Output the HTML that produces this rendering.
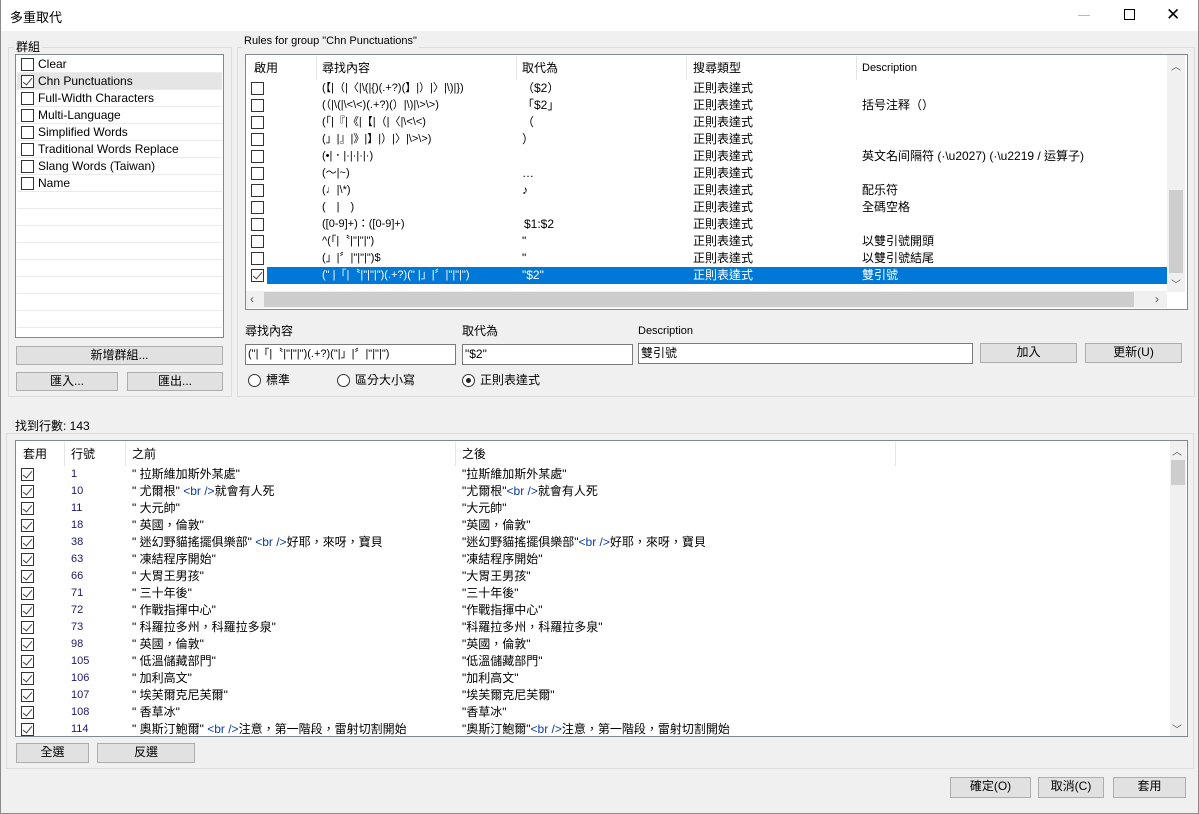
<!DOCTYPE html>
<html><head><meta charset="utf-8"><style>
*{box-sizing:border-box;margin:0;padding:0}
body{width:1199px;height:814px;overflow:hidden;background:#f0f0f0;font-family:"Liberation Sans","Noto Sans CJK TC",sans-serif;font-size:12px;color:#000;position:relative}
.a{position:absolute}
.win{left:0;top:0;width:1199px;height:814px;border:1px solid #8a8a8a;border-top:none}
.title{left:0;top:0;width:1199px;height:31px;background:#fff}
.gb{border:1px solid #dcdcdc}
.gl{background:#f0f0f0;padding:0 2px;line-height:14px}
.box{background:#fff;border:1px solid #828790}
.btn{background:#e1e1e1;border:1px solid #adadad;text-align:center;line-height:17px}
.cb{width:13px;height:13px;border:1px solid #333;background:#fff}
.cb.k::after{content:"";position:absolute;left:3px;top:0px;width:4px;height:8px;border:solid #444;border-width:0 1.3px 1.3px 0;transform:rotate(40deg)}
.row{position:absolute;height:17px;line-height:17px;white-space:nowrap}
.inp{background:#fff;border:1px solid #7a7a7a;line-height:18px;padding-left:2px;white-space:nowrap;overflow:hidden}
.rad{width:13px;height:13px;border:1px solid #333;border-radius:50%;background:#fff}
.sep{width:1px;background:#e5e5e5}
.n{color:#1a1a6e}
.t{color:#0b3c9c}
</style></head><body>
<div class="a title"></div>
<div class="a" style="left:10px;top:7px;font-size:13px">多重取代</div>
<div class="a" style="left:1078px;top:15px;width:12px;height:1px;background:#bbb"></div>
<div class="a" style="left:1124px;top:9px;width:11px;height:11px;border:1px solid #000"></div>
<div class="a" style="left:1166px;top:7px;font-size:17px;line-height:16px">✕</div>
<div class="a win"></div>

<!-- group box left -->
<div class="a gb" style="left:8px;top:47px;width:224px;height:350px"></div>
<div class="a gl" style="left:14px;top:40px;font-size:12px">群組</div>
<div class="a box" style="left:15px;top:54px;width:209px;height:284px"></div>
<div class="a" style="left:17px;top:73px;width:205px;height:17px;background:#e5e5e5"></div>
<div class="a" style="left:17px;top:56px;width:205px;height:280px;background:repeating-linear-gradient(to bottom,transparent 0,transparent 16px,#ebebeb 16px,#ebebeb 17px)"></div>
<div class="a" style="left:17px;top:73px;width:205px;height:16px;background:#e5e5e5"></div>
<div class="a cb" style="left:21px;top:58px"></div><div class="row" style="left:38px;top:56px">Clear</div>
<div class="a cb k" style="left:21px;top:75px"></div><div class="row" style="left:38px;top:73px">Chn Punctuations</div>
<div class="a cb" style="left:21px;top:92px"></div><div class="row" style="left:38px;top:90px">Full-Width Characters</div>
<div class="a cb" style="left:21px;top:109px"></div><div class="row" style="left:38px;top:107px">Multi-Language</div>
<div class="a cb" style="left:21px;top:126px"></div><div class="row" style="left:38px;top:124px">Simplified Words</div>
<div class="a cb" style="left:21px;top:143px"></div><div class="row" style="left:38px;top:141px">Traditional Words Replace</div>
<div class="a cb" style="left:21px;top:160px"></div><div class="row" style="left:38px;top:158px">Slang Words (Taiwan)</div>
<div class="a cb" style="left:21px;top:177px"></div><div class="row" style="left:38px;top:175px">Name</div>
<div class="a btn" style="left:16px;top:346px;width:207px;height:19px">新增群組...</div>
<div class="a btn" style="left:16px;top:372px;width:102px;height:19px">匯入...</div>
<div class="a btn" style="left:127px;top:372px;width:96px;height:19px">匯出...</div>

<!-- rules group -->
<div class="a gb" style="left:237px;top:47px;width:958px;height:350px"></div>
<div class="a gl" style="left:242px;top:34px;font-size:11px">Rules for group "Chn Punctuations"</div>
<div class="a box" style="left:245px;top:54px;width:943px;height:256px"></div>
<div class="a sep" style="left:316px;top:56px;height:24px"></div>
<div class="a sep" style="left:516px;top:56px;height:24px"></div>
<div class="a sep" style="left:686px;top:56px;height:24px"></div>
<div class="a sep" style="left:856px;top:56px;height:24px"></div>
<div class="row" style="left:254px;top:60px">啟用</div>
<div class="row" style="left:322px;top:60px">尋找內容</div>
<div class="row" style="left:522px;top:60px">取代為</div>
<div class="row" style="left:693px;top:60px">搜尋類型</div>
<div class="row" style="left:862px;top:60px;font-size:11px">Description</div>
<div class="a" style="left:267px;top:267px;width:900px;height:17px;background:#0078d7"></div>
<div class="a cb" style="left:251px;top:82px"></div><div class="a cb" style="left:251px;top:99px"></div><div class="a cb" style="left:251px;top:116px"></div><div class="a cb" style="left:251px;top:133px"></div><div class="a cb" style="left:251px;top:150px"></div><div class="a cb" style="left:251px;top:167px"></div><div class="a cb" style="left:251px;top:184px"></div><div class="a cb" style="left:251px;top:201px"></div><div class="a cb" style="left:251px;top:218px"></div><div class="a cb" style="left:251px;top:235px"></div><div class="a cb" style="left:251px;top:252px"></div><div class="a cb k" style="left:251px;top:269px"></div>
<div class="row" style="left:322px;top:80px;font-size:11px">(【|（|〈|\(|{)(.+?)(】|）|〉|\)|})</div>
<div class="row" style="left:322px;top:97px;font-size:11px">(（|\(|\&lt;\&lt;)(.+?)(）|\)|\&gt;\&gt;)</div>
<div class="row" style="left:322px;top:114px;font-size:11px">(「|『|《|【|（|〈|\&lt;\&lt;)</div>
<div class="row" style="left:322px;top:131px;font-size:11px">(」|』|》|】|）|〉|\&gt;\&gt;)</div>
<div class="row" style="left:322px;top:148px;font-size:11px">(•|．|·|·|·|·)</div>
<div class="row" style="left:322px;top:165px;font-size:11px">(～|~)</div>
<div class="row" style="left:322px;top:182px;font-size:11px">(♩|\*)</div>
<div class="row" style="left:322px;top:199px;font-size:11px">(　|　)</div>
<div class="row" style="left:322px;top:216px;font-size:11px">([0-9]+)：([0-9]+)</div>
<div class="row" style="left:322px;top:233px;font-size:11px">^(「|〝|"|"|")</div>
<div class="row" style="left:322px;top:250px;font-size:11px">(」|〞|"|"|")$</div>
<div class="row" style="left:322px;top:267px;font-size:11px;color:#fff">(" |「|〝|"|"|")(.+?)(" |」|〞|"|"|")</div>
<div class="row" style="left:522px;top:80px">（$2）</div>
<div class="row" style="left:522px;top:97px">「$2」</div>
<div class="row" style="left:522px;top:114px">（</div>
<div class="row" style="left:522px;top:131px">）</div>
<div class="row" style="left:522px;top:165px">…</div>
<div class="row" style="left:522px;top:182px">♪</div>
<div class="row" style="left:524px;top:216px">$1:$2</div>
<div class="row" style="left:522px;top:233px">"</div>
<div class="row" style="left:522px;top:250px">"</div>
<div class="row" style="left:522px;top:267px;color:#fff">"$2"</div>
<div class="row" style="left:693px;top:80px;line-height:17px">正則表達式<br>正則表達式<br>正則表達式<br>正則表達式<br>正則表達式<br>正則表達式<br>正則表達式<br>正則表達式<br>正則表達式<br>正則表達式<br>正則表達式<br><span style="color:#fff">正則表達式</span></div>
<div class="row" style="left:862px;top:97px">括号注释（）</div>
<div class="row" style="left:862px;top:148px">英文名间隔符 (·\u2027) (·\u2219 / 运算子)</div>
<div class="row" style="left:862px;top:182px">配乐符</div>
<div class="row" style="left:862px;top:199px">全碼空格</div>
<div class="row" style="left:862px;top:233px">以雙引號開頭</div>
<div class="row" style="left:862px;top:250px">以雙引號結尾</div>
<div class="row" style="left:862px;top:267px;color:#fff">雙引號</div>
<!-- scrollbars -->
<div class="a" style="left:1167px;top:55px;width:18px;height:237px;background:#f0f0f0"></div>
<div class="a" style="left:1169px;top:190px;width:14px;height:83px;background:#cdcdcd"></div>
<div class="a" style="left:1171px;top:58px;font-size:10px;color:#555">︿</div>
<div class="a" style="left:1171px;top:276px;font-size:10px;color:#555">﹀</div>
<div class="a" style="left:246px;top:291px;width:921px;height:17px;background:#f0f0f0"></div>
<div class="a" style="left:264px;top:292px;width:870px;height:15px;background:#cdcdcd"></div>
<div class="a" style="left:250px;top:292px;color:#555">‹</div>
<div class="a" style="left:1155px;top:292px;color:#555">›</div>

<div class="row" style="left:245px;top:323px">尋找內容</div>
<div class="a inp" style="left:245px;top:344px;width:211px;height:21px;font-size:11px">("|「|〝|"|"|")(.+?)("|」|〞|"|"|")</div>
<div class="row" style="left:462px;top:323px">取代為</div>
<div class="a inp" style="left:462px;top:344px;width:171px;height:21px">"$2"</div>
<div class="row" style="left:638px;top:323px;font-size:11px">Description</div>
<div class="a inp" style="left:638px;top:343px;width:335px;height:21px">雙引號</div>
<div class="a btn" style="left:980px;top:343px;width:97px;height:20px">加入</div>
<div class="a btn" style="left:1085px;top:343px;width:97px;height:20px">更新(U)</div>
<div class="a rad" style="left:248px;top:374px"></div><div class="row" style="left:266px;top:372px">標準</div>
<div class="a rad" style="left:337px;top:374px"></div><div class="row" style="left:355px;top:372px">區分大小寫</div>
<div class="a rad" style="left:462px;top:374px"></div><div class="a" style="left:466px;top:378px;width:5px;height:5px;border-radius:50%;background:#222"></div><div class="row" style="left:480px;top:372px">正則表達式</div>

<!-- found group -->
<div class="a gb" style="left:6px;top:433px;width:1188px;height:336px"></div>
<div class="a gl" style="left:13px;top:419px">找到行數: 143</div>
<div class="a box" style="left:15px;top:440px;width:1173px;height:297px"></div>
<div class="a sep" style="left:64px;top:442px;height:24px"></div>
<div class="a sep" style="left:125px;top:442px;height:24px"></div>
<div class="a sep" style="left:455px;top:442px;height:24px"></div>
<div class="a sep" style="left:895px;top:442px;height:24px"></div>
<div class="row" style="left:23px;top:446px">套用</div>
<div class="row" style="left:71px;top:446px">行號</div>
<div class="row" style="left:132px;top:446px">之前</div>
<div class="row" style="left:462px;top:446px">之後</div>
<div class="a" style="left:1170px;top:441px;width:16px;height:295px;background:#f0f0f0"></div>
<div class="a" style="left:1171px;top:460px;width:14px;height:25px;background:#cdcdcd"></div>
<div class="a" style="left:1172px;top:443px;font-size:10px;color:#555">︿</div>
<div class="a" style="left:1172px;top:721px;font-size:10px;color:#555">﹀</div>
<div class="a" style="left:16px;top:466px;width:1150px;height:270px;overflow:hidden">
<div class="a" style="left:0;top:0;width:1150px">
<div class="a cb k" style="left:5px;top:2px"></div><div class="a cb k" style="left:5px;top:19px"></div><div class="a cb k" style="left:5px;top:36px"></div><div class="a cb k" style="left:5px;top:53px"></div><div class="a cb k" style="left:5px;top:70px"></div><div class="a cb k" style="left:5px;top:87px"></div><div class="a cb k" style="left:5px;top:104px"></div><div class="a cb k" style="left:5px;top:121px"></div><div class="a cb k" style="left:5px;top:138px"></div><div class="a cb k" style="left:5px;top:155px"></div><div class="a cb k" style="left:5px;top:172px"></div><div class="a cb k" style="left:5px;top:189px"></div><div class="a cb k" style="left:5px;top:206px"></div><div class="a cb k" style="left:5px;top:223px"></div><div class="a cb k" style="left:5px;top:240px"></div><div class="a cb k" style="left:5px;top:257px"></div>
<div class="row n" style="left:55px;top:0;line-height:17px;font-size:11px">1<br>10<br>11<br>18<br>38<br>63<br>66<br>71<br>72<br>73<br>98<br>105<br>106<br>107<br>108<br>114</div>
<div class="row" style="left:116px;top:0;line-height:17px">" 拉斯維加斯外某處"<br>" 尤爾根" <span class="t">&lt;br /&gt;</span>就會有人死<br>" 大元帥"<br>" 英國，倫敦"<br>" 迷幻野貓搖擺俱樂部" <span class="t">&lt;br /&gt;</span>好耶，來呀，寶貝<br>" 凍結程序開始"<br>" 大胃王男孩"<br>" 三十年後"<br>" 作戰指揮中心"<br>" 科羅拉多州，科羅拉多泉"<br>" 英國，倫敦"<br>" 低溫儲藏部門"<br>" 加利高文"<br>" 埃芙爾克尼芙爾"<br>" 香草冰"<br>" 奧斯汀鮑爾" <span class="t">&lt;br /&gt;</span>注意，第一階段，雷射切割開始</div>
<div class="row" style="left:446px;top:0;line-height:17px">"拉斯維加斯外某處"<br>"尤爾根"<span class="t">&lt;br /&gt;</span>就會有人死<br>"大元帥"<br>"英國，倫敦"<br>"迷幻野貓搖擺俱樂部"<span class="t">&lt;br /&gt;</span>好耶，來呀，寶貝<br>"凍結程序開始"<br>"大胃王男孩"<br>"三十年後"<br>"作戰指揮中心"<br>"科羅拉多州，科羅拉多泉"<br>"英國，倫敦"<br>"低溫儲藏部門"<br>"加利高文"<br>"埃芙爾克尼芙爾"<br>"香草冰"<br>"奧斯汀鮑爾"<span class="t">&lt;br /&gt;</span>注意，第一階段，雷射切割開始</div>
</div></div>
<div class="a btn" style="left:16px;top:743px;width:73px;height:20px">全選</div>
<div class="a btn" style="left:97px;top:743px;width:98px;height:20px">反選</div>

<div class="a btn" style="left:950px;top:777px;width:81px;height:21px">確定(O)</div>
<div class="a btn" style="left:1038px;top:777px;width:66px;height:21px">取消(C)</div>
<div class="a btn" style="left:1113px;top:777px;width:73px;height:21px">套用</div>
</body></html>
